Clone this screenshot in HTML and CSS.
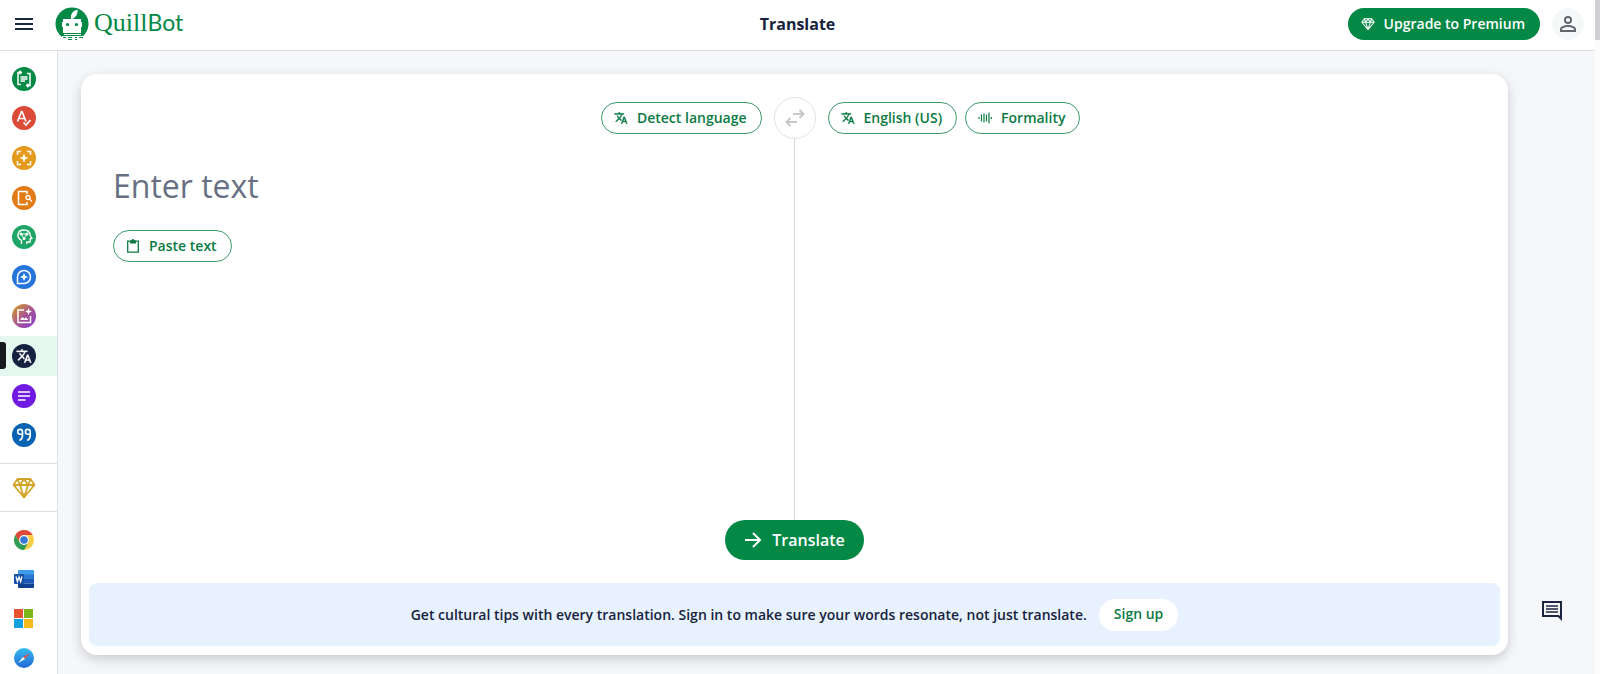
FILE: index.html
```html
<!DOCTYPE html>
<html lang="en">
<head>
  <meta charset="utf-8">
  <meta name="viewport" content="width=device-width, initial-scale=1">
  <title>Translate</title>
  <link rel="stylesheet" href="styles.css">
</head>
<body>

  <!-- shared icons -->
  <svg class="sprite" aria-hidden="true">
    <symbol id="icon-translate" viewBox="0 0 24 24">
      <path fill="currentColor" stroke="currentColor" stroke-width=".5" d="M12.870 15.070l-2.540-2.510.030-.030A17.520 17.520 0 0 0 14.070 6H17V4h-7V2H8v2H1v2h11.170C11.500 7.920 10.440 9.750 9 11.350 8.070 10.320 7.300 9.190 6.690 8h-2c.730 1.630 1.730 3.170 2.980 4.560l-5.090 5.020L4 19l5-5 3.110 3.110.760-2.040zM18.500 10h-2L12 22h2l1.120-3h4.750L21 22h2l-4.500-12zm-2.620 7l1.620-4.330L19.120 17h-3.240z"/>
    </symbol>
    <symbol id="icon-diamond" viewBox="0 0 24 24">
      <path fill="none" stroke="currentColor" stroke-width="1.800" stroke-linejoin="round" d="M5.500 3h13L22.500 9 12 21.500 1.500 9zM1.500 9h21M5.500 3L8 9l4-6 4 6 2.500-6M8 9l4 12.500L16 9"/>
    </symbol>
  </svg>

  <!-- HEADER -->
  <header class="header">
    <div class="header-left">
      <button class="icon-button menu-button" aria-label="Menu">
        <svg width="18" height="14" viewBox="0 0 18 14"><path d="M0 2h18M0 7h18M0 12h18" stroke="#1b2540" stroke-width="2"/></svg>
      </button>
      <a class="logo" href="#">
        <svg width="34" height="34" viewBox="0 0 34 34" aria-hidden="true">
          <path fill="#038846" d="M7 30A16.500 16.500 0 1 1 27 30z"/>
          <path fill="#fff" d="M16 12c-.5-5 1.500-8 6.500-9.500C23 7 21 10 17.500 12zM8 12h18v3h1v5h-1v6H8v-6H7v-5h1z"/>
          <circle cx="12.500" cy="17.500" r="1.600" fill="#038846"/>
          <circle cx="21.500" cy="17.500" r="1.600" fill="#038846"/>
          <path fill="#fff" d="M9 27h17v1H9zM7 29h22v5H7z"/>
          <path fill="none" stroke="#038846" d="M8 30.500h3m2 0h4m3 0h2m2 0h4M13 32.500h4m3 0h2"/>
        </svg>
        <span class="logo-text"><span class="logo-quill">Quill</span><span class="logo-bot">Bot</span></span>
      </a>
    </div>
    <h1 class="page-title">Translate</h1>
    <div class="header-right">
      <button class="button button-solid upgrade">
        <svg width="14" height="14"><use href="#icon-diamond"/></svg>
        Upgrade to Premium
      </button>
      <button class="icon-button avatar" aria-label="Account">
        <svg width="24" height="24" viewBox="0 0 24 24"><path fill="#62666d" d="M12 5.900a2.100 2.100 0 1 1 0 4.200 2.100 2.100 0 0 1 0-4.200m0 9c2.970 0 6.100 1.460 6.100 2.100v1.100H5.900V17c0-.64 3.130-2.100 6.100-2.100M12 4a4 4 0 1 0 0 8 4 4 0 0 0 0-8zm0 9c-2.670 0-8 1.340-8 4v3h16v-3c0-2.660-5.330-4-8-4z"/></svg>
      </button>
    </div>
  </header>

  <div class="page">

    <!-- SIDEBAR -->
    <nav class="sidebar" aria-label="Tools">
      <div class="tools">
        <a class="tool" href="#" aria-label="Paraphraser">
          <svg width="24" height="24" viewBox="0 0 24 24"><circle cx="12" cy="12" r="12" fill="#038846"/><path fill="none" stroke="#fff" stroke-width="1.500" d="M9 5.500H6v12h3M7.500 3.800L9.300 5.500 7.500 7.200M15 6.500h3v12h-3M16.500 16.800l-1.800 1.700 1.800 1.700M8.500 10h7M8.500 12h7M8.500 14h4.500"/></svg>
        </a>
        <a class="tool" href="#" aria-label="Grammar Checker">
          <svg width="24" height="24" viewBox="0 0 24 24"><circle cx="12" cy="12" r="12" fill="#dc4a38"/><path fill="none" stroke="#fff" stroke-width="1.700" d="M5.500 15.500l4-10h.5l4 10M7 12.500h5.500M11.500 16.500l2.500 2.500 4.500-5"/></svg>
        </a>
        <a class="tool" href="#" aria-label="AI Detector">
          <svg width="24" height="24" viewBox="0 0 24 24"><circle cx="12" cy="12" r="12" fill="#e59a1c"/><path fill="none" stroke="#fff" stroke-width="1.500" d="M9 5.500H5.500V9M15 5.500h3.500V9M9 18.500H5.500V15M15 18.500h3.500V15"/><path fill="#fff" d="M12 7.500l1.300 3.200 3.200 1.300-3.200 1.300L12 16.500l-1.300-3.200L7.500 12l3.200-1.300z"/></svg>
        </a>
        <a class="tool" href="#" aria-label="Plagiarism Checker">
          <svg width="24" height="24" viewBox="0 0 24 24"><circle cx="12" cy="12" r="12" fill="#e17b16"/><path fill="none" stroke="#fff" stroke-width="1.500" d="M15 8V5.500H6.500v13H15V16"/><circle cx="16" cy="11.500" r="2" fill="none" stroke="#fff" stroke-width="1.300"/><path d="M17.500 13l2.500 2.500" stroke="#fff" stroke-width="1.300"/></svg>
        </a>
        <a class="tool" href="#" aria-label="AI Humanizer">
          <svg width="24" height="24" viewBox="0 0 24 24"><circle cx="12" cy="12" r="12" fill="#1ca566"/><path fill="none" stroke="#fff" stroke-width="1.400" stroke-linejoin="round" d="M9.500 19v-3.500C3.500 12 5.500 5 12 5c4 0 6 2.500 6.200 5.500l1.800 3h-1.800V17h-3.500v2"/><path d="M9 9h6l-3 4.500z" fill="none" stroke="#fff"/><circle cx="9" cy="9" r="1.500" fill="#fff"/><circle cx="15" cy="9" r="1.500" fill="#fff"/><circle cx="12" cy="13.500" r="1.500" fill="#fff"/></svg>
        </a>
        <a class="tool" href="#" aria-label="AI Chat">
          <svg width="24" height="24" viewBox="0 0 24 24"><circle cx="12" cy="12" r="12" fill="#2474dc"/><path fill="none" stroke="#fff" stroke-width="1.500" d="M5.500 18.500V12a6.500 6.500 0 1 1 6.500 6.500z"/><path fill="#fff" d="M12 8l1.200 2.800L16 12l-2.800 1.200L12 16l-1.200-2.800L8 12l2.800-1.200z"/></svg>
        </a>
        <a class="tool" href="#" aria-label="AI Image Generator">
          <svg width="24" height="24" viewBox="0 0 24 24"><defs><linearGradient id="image-fill" x1="0" y1="0" x2="1" y2="1"><stop offset=".1" stop-color="#cf9532"/><stop offset=".5" stop-color="#a9588e"/><stop offset=".9" stop-color="#8d3cc5"/></linearGradient></defs><circle cx="12" cy="12" r="12" fill="url(#image-fill)"/><path fill="none" stroke="#fff" stroke-width="1.500" d="M12 6H6v12.500h12.500V12"/><path fill="#fff" d="M8 16l2.500-3 1.800 1.800 1.700-1.500 2.500 2.700zM16.500 4l1 2.500 2.500 1-2.500 1-1 2.500-1-2.500-2.500-1 2.500-1z"/></svg>
        </a>
        <a class="tool tool-active" href="#" aria-label="Translate" aria-current="page">
          <svg width="24" height="24" viewBox="0 0 24 24"><circle cx="12" cy="12" r="12" fill="#14213f"/><use href="#icon-translate" x="4" y="4" width="16" height="16" color="#fff"/></svg>
        </a>
        <a class="tool" href="#" aria-label="Summarizer">
          <svg width="24" height="24" viewBox="0 0 24 24"><circle cx="12" cy="12" r="12" fill="#6f1be4"/><path d="M6 8h12M6 12h12M6 16h7.500" stroke="#fff" stroke-width="1.500"/></svg>
        </a>
        <a class="tool" href="#" aria-label="Citation Generator">
          <svg width="24" height="24" viewBox="0 0 24 24"><circle cx="12" cy="12" r="12" fill="#0863b2"/><path fill="none" stroke="#fff" stroke-width="1.600" d="M10.500 8.700a2.400 2.400 0 1 0-2.400 2.500h2.400V8.700v3.800q0 3.500-3 5M18.200 8.700a2.400 2.400 0 1 0-2.400 2.500h2.400V8.700v3.800q0 3.500-3 5"/></svg>
        </a>
      </div>
      <a class="premium" href="#" aria-label="Premium">
        <svg width="24" height="24"><use href="#icon-diamond"/></svg>
      </a>
      <div class="apps">
        <a class="tool" href="#" aria-label="Chrome extension">
          <svg width="20" height="20" viewBox="0 0 20 20"><circle cx="10" cy="10" r="10" fill="#f9cf46"/><path fill="#d94b3c" d="M1.340 5A10 10 0 0 1 18.660 5H10L5.700 12.500z"/><path fill="#2d9d57" d="M1.340 5L5.670 12.500 10 15 10 20A10 10 0 0 1 1.340 5zM14.330 12.500L10 20V14z"/><circle cx="10" cy="10" r="4.900" fill="#fff"/><circle cx="10" cy="10" r="3.800" fill="#3479d2"/></svg>
        </a>
        <a class="tool" href="#" aria-label="Word add-in">
          <svg width="20" height="18" viewBox="0 0 20 18"><path fill="#3f9be8" d="M5 0h14q1 0 1 1v4H4V1q0-1 1-1z"/><path fill="#2b78d2" d="M4 4.500h16V9H4z"/><path fill="#1a59b8" d="M4 9h16v4.500H4z"/><path fill="#103f91" d="M4 13.500h16V17q0 1-1 1H5q-1 0-1-1z"/><rect y="4" width="10" height="10" rx="1" fill="#174fa5"/><path fill="none" stroke="#fff" stroke-width="1.300" d="M2 6.500l1.400 5L5 7l1.600 4.500 1.400-5"/></svg>
        </a>
        <a class="tool" href="#" aria-label="Windows app">
          <svg width="19" height="19" viewBox="0 0 19 19"><path fill="#e65330" d="M0 0h9v9H0z"/><path fill="#7db51c" d="M10 0h9v9h-9z"/><path fill="#159fdd" d="M0 10h9v9H0z"/><path fill="#f7b81a" d="M10 10h9v9h-9z"/></svg>
        </a>
        <a class="tool" href="#" aria-label="Safari extension">
          <svg width="20" height="20" viewBox="0 0 20 20"><defs><linearGradient id="safari-fill" x2="0" y2="1"><stop stop-color="#35bdf0"/><stop offset="1" stop-color="#2367d4"/></linearGradient></defs><circle cx="10" cy="10" r="10" fill="url(#safari-fill)"/><path fill="#e45345" d="M16 5l-7 4 2 2z"/><path fill="#fff" d="M4 15l7-4-2-2z"/></svg>
        </a>
      </div>
    </nav>

    <!-- TRANSLATOR -->
    <main class="content">
      <section class="card">
        <div class="toolbar">
          <div class="source-options">
            <button class="button button-outline"><svg width="14" height="14"><use href="#icon-translate"/></svg>Detect language</button>
          </div>
          <button class="icon-button swap" aria-label="Swap languages" disabled>
            <svg width="20" height="18" viewBox="0 0 20 18"><path fill="none" stroke="#c5c7ca" stroke-width="2" d="M8 5h10.500M14.500 1l4 4-4 4M12 13H1.500M5.500 9l-4 4 4 4"/></svg>
          </button>
          <div class="target-options">
            <button class="button button-outline"><svg width="14" height="14"><use href="#icon-translate"/></svg>English (US)</button>
            <button class="button button-outline"><svg width="14" height="14" viewBox="0 0 14 14"><path d="M1 6v2M3.500 3.500v7M6 2.500v9M8.500 3.500v7M11 1.500v11M13.300 6v2" stroke="currentColor" stroke-width="1.200"/></svg>Formality</button>
          </div>
        </div>

        <div class="panes">
          <div class="source">
            <textarea class="source-text" rows="1" placeholder="Enter text" aria-label="Enter text"></textarea>
            <button class="button button-outline"><svg width="14" height="14" viewBox="0 0 14 14"><path fill="none" stroke="currentColor" stroke-width="1.300" d="M1.700 2.200h10.600v11H1.700z"/><path fill="currentColor" d="M4 1.500h1.500a1.500 1.500 0 0 1 3 0H10V4.500H4z"/></svg>Paste text</button>
          </div>
          <div class="divider"></div>
          <div class="target"></div>
        </div>

        <button class="button button-solid translate">
          <svg width="18" height="18" viewBox="0 0 18 18"><path fill="none" stroke="currentColor" stroke-width="2" d="M1 9h15M9 2l7 7-7 7"/></svg>
          Translate
        </button>

        <div class="banner">
          <span>Get cultural tips with every translation. Sign in to make sure your words resonate, not just translate.</span>
          <button class="button signup">Sign up</button>
        </div>
      </section>
    </main>
  </div>

  <button class="icon-button feedback" aria-label="Feedback">
    <svg width="20" height="20" viewBox="0 0 20 20"><path fill="none" stroke="#1b2540" stroke-width="2" d="M1 1h18v16.500L16.500 15H1z"/><path d="M4 5h12M4 8h12M4 11h12" stroke="#1b2540" stroke-width="1.700"/></svg>
  </button>
  <div class="scroll-track"><div class="scroll-thumb"></div></div>

</body>
</html>
```
FILE: styles.css
```css
* {
  box-sizing: border-box;
}
body {
  display: flex;
  flex-direction: column;
  height: 100vh;
  margin: 0;
  padding-right: 5px;
  overflow: hidden;
  font-family: "Open Sans", "Noto Sans", sans-serif;
  font-size: 14px;
  color: #17233d;
  background-color: #fff;
}
svg {
  display: block;
  flex: none;
}
.sprite {
  position: absolute;
  width: 0;
  height: 0;
}
button {
  font-family: inherit;
  cursor: pointer;
}

/* Buttons */
.icon-button {
  display: flex;
  align-items: center;
  justify-content: center;
  padding: 0;
  border: none;
  background: none;
}
.button {
  display: inline-flex;
  align-items: center;
  justify-content: center;
  gap: 9px;
  height: 32px;
  padding: 0 14px 1px 12px;
  border: 1px solid transparent;
  border-radius: 20px;
  font-size: 14px;
  font-weight: 600;
  line-height: 20px;
  white-space: nowrap;
}
.button-outline {
  color: #0b7a45;
  background-color: #fff;
  border-color: #3f9a6d;
}
.button-solid {
  color: #fff;
  background-color: #038846;
}

/* Header */
.header {
  display: grid;
  grid-template-columns: 1fr auto 1fr;
  align-items: center;
  flex: none;
  height: 51px;
  padding-bottom: 2px;
  border-bottom: 1px solid #dcdee1;
}
.header-left {
  display: flex;
  align-items: center;
  gap: 22px;
  padding-left: 15px;
}
.logo {
  display: flex;
  align-items: center;
  gap: 5px;
  color: #038846;
  text-decoration: none;
}
.logo-text {
  line-height: 32px;
}
.logo-quill {
  font-family: "Liberation Serif", serif;
  font-size: 26px;
}
.logo-bot {
  font-family: Lato, sans-serif;
  font-size: 23px;
}
.page-title {
  margin: 0;
  font-size: 16px;
  font-weight: 700;
  line-height: 24px;
}
.header-right {
  display: flex;
  align-items: center;
  justify-content: flex-end;
  gap: 12px;
  padding-right: 11px;
}
.avatar {
  width: 32px;
  height: 32px;
  border-radius: 50%;
  background-color: #f6f7f8;
}

/* Sidebar */
.page {
  display: flex;
  flex: 1;
  min-height: 0;
}
.sidebar {
  flex: none;
  width: 58px;
  padding-top: 8px;
  border-right: 1px solid #dfe2e5;
}
.tools {
  display: flex;
  flex-direction: column;
  height: 396px;
}
.tool {
  display: flex;
  flex: 1;
  align-items: center;
  width: 100%;
  padding: 0 10px 0 12px;
}
.tool-active {
  position: relative;
  background-color: #e4f8ef;
}
.tool-active::before {
  content: "";
  position: absolute;
  left: 0;
  width: 6px;
  height: 27px;
  border-radius: 0 3px 3px 0;
  background-color: #17191c;
}
.premium {
  display: flex;
  align-items: center;
  height: 49px;
  margin-top: 8px;
  padding-left: 12px;
  color: #d2a52a;
  border: solid #dcdee1;
  border-width: 1px 0;
}
.apps {
  display: flex;
  flex-direction: column;
  height: 158px;
  margin-top: 8px;
}
.apps .tool {
  padding-left: 14px;
}

/* Translator card */
.content {
  display: flex;
  flex: 1;
  min-width: 0;
  padding: 23px 87px 19px 23px;
  background-color: #f6f7f9;
}
.card {
  display: flex;
  flex: 1;
  flex-direction: column;
  min-width: 0;
  padding: 23px 8px 9px;
  border-radius: 16px;
  background-color: #fff;
  box-shadow: 0 4px 12px rgba(20, 30, 50, 0.2);
}
.toolbar {
  display: grid;
  grid-template-columns: 1fr 42px 1fr;
  align-items: center;
  gap: 12px;
}
.source-options {
  display: flex;
  justify-content: flex-end;
}
.target-options {
  display: flex;
  gap: 8px;
}
.swap {
  width: 42px;
  height: 42px;
  border: 1px solid #e1e3e5;
  border-radius: 50%;
}
.panes {
  display: grid;
  grid-template-columns: 1fr 1px 1fr;
  flex: 1;
}
.source {
  display: flex;
  flex-direction: column;
  align-items: flex-start;
  gap: 22px;
  padding: 25px 24px 0;
}
.source-text {
  width: 100%;
  height: 44px;
  padding: 0;
  border: none;
  outline: none;
  resize: none;
  overflow: hidden;
  font-family: inherit;
  font-size: 32px;
  line-height: 44px;
  color: #17233d;
  background: none;
}
.source-text::placeholder {
  color: #677083;
  opacity: 1;
}
.divider {
  background-color: #d3d5d8;
}
.translate {
  align-self: center;
  gap: 10px;
  height: 40px;
  padding: 0 18px 1px;
  font-size: 16px;
}
.banner {
  display: flex;
  align-items: center;
  justify-content: center;
  gap: 12px;
  height: 63px;
  margin-top: 23px;
  border-radius: 8px;
  font-weight: 600;
  background-color: #e8f2fe;
}
.signup {
  padding: 0 14px 1px;
  color: #0b7a45;
  background-color: #fff;
}

/* Floating items */
.feedback {
  position: fixed;
  right: 38px;
  bottom: 53px;
}
.scroll-track {
  position: fixed;
  top: 0;
  right: 0;
  bottom: 0;
  width: 5px;
  background-color: #fbfbfc;
}
.scroll-thumb {
  height: 40px;
  background-color: #cfd1d4;
}
```
